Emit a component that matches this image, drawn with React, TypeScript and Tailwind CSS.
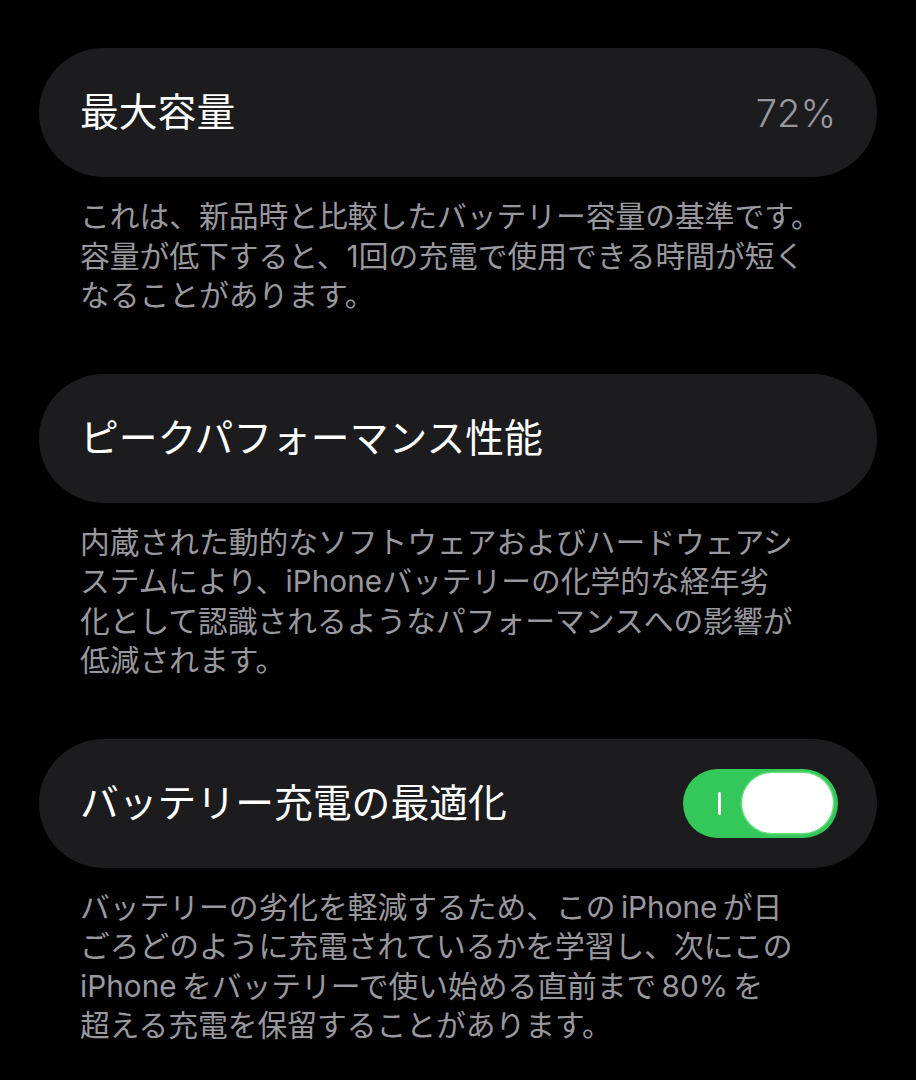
import type { ReactNode } from "react"

const font = { fontFamily: 'Inter, "Noto Sans CJK JP", sans-serif' }

interface RowProps {
  title: string
  children?: ReactNode
}

const Row = ({ title, children }: RowProps) => (
  <div className="flex h-[129px] items-center justify-between rounded-full bg-[#1c1c1e] pl-[41px] pr-[41px]">
    <span className="text-[38.8px] leading-none text-white">{title}</span>
    {children}
  </div>
)

const Footnote = ({ lines }: { lines: string[] }) => (
  <p className="mb-[58px] pl-[41px] pt-[20px] text-[29.75px] leading-[39.5px] text-[#98989e]">
    {lines.map((line, i) => (
      <span key={i} className="block whitespace-nowrap">
        {line}
      </span>
    ))}
  </p>
)

const Toggle = () => (
  <div className="-mr-[2px] flex h-[69px] w-[155px] items-center rounded-full bg-[#34c759] pl-[35px] pr-[5px]">
    <span className="h-[23px] w-[2.5px] rounded-full bg-white" />
    <span className="ml-auto h-[60px] w-[91px] rounded-full bg-white shadow-[0_0_0_1.5px_rgba(120,230,140,0.7)]" />
  </div>
)

export default function App() {
  return (
    <div className="min-h-[1080px] w-[916px] bg-black px-[39px] pt-[48px]" style={font}>
      <Row title="最大容量">
        <span className="text-[38px] font-light leading-none text-[#98989e]">72%</span>
      </Row>
      <Footnote
        lines={[
          "これは、新品時と比較したバッテリー容量の基準です。",
          "容量が低下すると、1回の充電で使用できる時間が短く",
          "なることがあります。",
        ]}
      />

      <Row title="ピークパフォーマンス性能" />
      <Footnote
        lines={[
          "内蔵された動的なソフトウェアおよびハードウェアシ",
          "ステムにより、iPhoneバッテリーの化学的な経年劣",
          "化として認識されるようなパフォーマンスへの影響が",
          "低減されます。",
        ]}
      />

      <Row title="バッテリー充電の最適化">
        <Toggle />
      </Row>
      <Footnote
        lines={[
          "バッテリーの劣化を軽減するため、この\u2009iPhone\u2009が日",
          "ごろどのように充電されているかを学習し、次にこの",
          "iPhone\u2009をバッテリーで使い始める直前まで\u200980%\u2009を",
          "超える充電を保留することがあります。",
        ]}
      />
    </div>
  )
}
